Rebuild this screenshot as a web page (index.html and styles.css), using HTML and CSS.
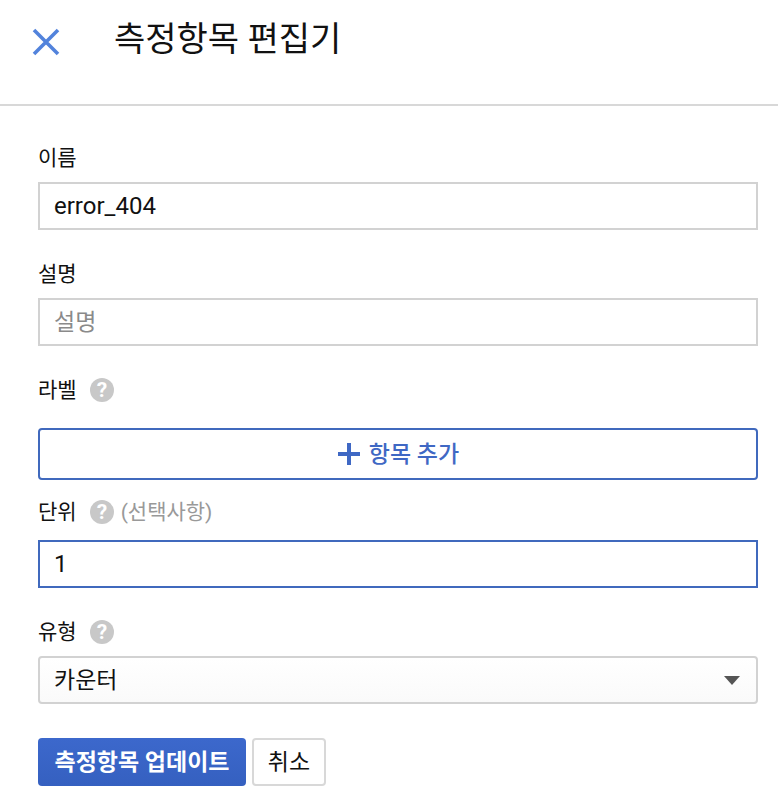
FILE: index.html
```html
<!DOCTYPE html>
<html lang="ko">
<head>
<meta charset="utf-8">
<title>측정항목 편집기</title>
<link rel="stylesheet" href="styles.css">
</head>
<body>
<header class="header">
  <svg class="close" width="30" height="30" viewBox="0 0 30 30"><path d="M3 3 L27 27 M27 3 L3 27" fill="none" stroke="#5283dc" stroke-width="3.6"/></svg>
  <h1 class="title">측정항목 편집기</h1>
</header>
<form class="form">
  <div class="label l-name">이름</div>
  <div class="field">error_404</div>
  <div class="label l-desc">설명</div>
  <div class="field ko placeholder">설명</div>
  <div class="label l-tags">라벨 <svg class="help" width="24" height="24" viewBox="0 0 24 24"><circle cx="12" cy="12" r="12" fill="#c8c8c8"/><text x="12" y="19" text-anchor="middle" class="q">?</text></svg></div>
  <div class="add"><svg width="24" height="24" viewBox="0 0 24 24"><path d="M1 12H23M12 1V23" stroke="#3f68c4" stroke-width="4" fill="none"/></svg><span>항목 추가</span></div>
  <div class="label l-unit">단위 <svg class="help" width="24" height="24" viewBox="0 0 24 24"><circle cx="12" cy="12" r="12" fill="#c8c8c8"/><text x="12" y="19" text-anchor="middle" class="q">?</text></svg> <span class="opt">(선택사항)</span></div>
  <div class="field focus">1</div>
  <div class="label l-type">유형 <svg class="help" width="24" height="24" viewBox="0 0 24 24"><circle cx="12" cy="12" r="12" fill="#c8c8c8"/><text x="12" y="19" text-anchor="middle" class="q">?</text></svg></div>
  <div class="field ko select"><span>카운터</span><i class="arrow"></i></div>
  <div class="actions">
    <div class="btn primary">측정항목 업데이트</div>
    <div class="btn cancel">취소</div>
  </div>
</form>
</body>
</html>
```
FILE: styles.css
```css
* { box-sizing: border-box; }
html, body { margin: 0; padding: 0; background: #fff; }
body { width: 778px; height: 802px; overflow: hidden; color: #111; font-family: "Roboto", "Noto Sans CJK KR", sans-serif; }
.header { height: 106px; border-bottom: 2px solid #d8d8d8; display: flex; align-items: flex-start; padding: 27px 0 0 31px; }
.close { display: block; flex: none; }
.title { margin: -12px 0 0 53px; font-size: 34px; font-weight: 400; line-height: 48px; }
.form { padding: 0 20px 0 38px; }
.label { display: flex; align-items: center; font-size: 21px; line-height: 30px; height: 30px; }
.help { margin-left: 13px; display: block; }
.q { font: 700 21px "Roboto", sans-serif; fill: #fff; }
.opt { color: #999; margin-left: 7px; }
.l-name { margin-top: 37px; }
.l-desc { margin-top: 29px; }
.l-tags { margin-top: 29px; }
.l-unit { margin-top: 17px; }
.l-type { margin-top: 29px; }
.field { height: 48px; margin-top: 9px; border: 2px solid #d2d2d2; padding: 0 14px 1px; display: flex; align-items: center; font-size: 24px; background: #fff; }
.ko { font-size: 23px; padding-bottom: 5px; }
.placeholder { color: #8a8a8a; }
.focus { border-color: #4069bd; margin-top: 13px; padding-bottom: 0; }
.select { border-radius: 4px; background: linear-gradient(#fff, #fafafa); justify-content: space-between; padding-right: 16px; }
.arrow { border-left: 8.5px solid transparent; border-right: 8.5px solid transparent; border-top: 9px solid #555; margin-top: 5px; }
.add { height: 52px; margin-top: 23px; border: 2px solid #4069bd; border-radius: 4px; padding-bottom: 5px; display: flex; align-items: center; justify-content: center; gap: 8px; color: #3f68c4; font-size: 23px; font-weight: 500; }
.add svg { margin-top: 5px; }
.actions { display: flex; gap: 6px; margin-top: 34px; }
.btn { height: 48px; border-radius: 4px; padding-bottom: 5px; display: flex; align-items: center; justify-content: center; font-size: 23px; }
.primary { width: 208px; background: linear-gradient(#3c68cc, #3560c0); color: #fff; font-weight: 700; }
.cancel { width: 74px; border: 2px solid #d8d8d8; background: #fff; }
```
